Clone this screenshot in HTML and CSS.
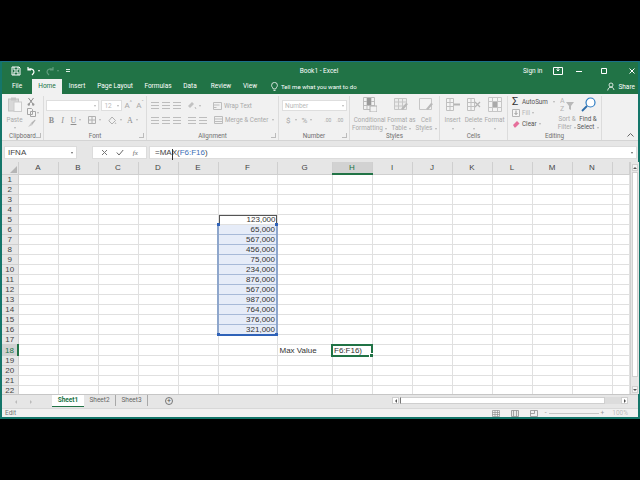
FILE: index.html
```html
<!DOCTYPE html>
<html>
<head>
  <title>Book1 - Excel</title>
  <link rel="stylesheet" href="styles.css">
</head>
<body>
  <div class="window">
    <div class="titlebar">
      <div class="qat">
        <svg class="qat-save" width="10" height="10" viewBox="0 0 10 10"><path d="M1 1h7l1 1v7H1z M3 1v3h4V1 M3 9V6h4v3" fill="none" stroke="#fff" stroke-width="1"/></svg>
        <svg class="qat-undo" width="10" height="10" viewBox="0 0 10 10"><path d="M2 1v3h3 M2 4c2-2 6-1 6 2 0 1-1 2-2 3" fill="none" stroke="#fff" stroke-width="1.2"/></svg>
        <span class="caret-white"></span>
        <svg class="qat-redo" width="10" height="10" viewBox="0 0 10 10"><path d="M8 1v3H5 M8 4C6 2 2 3 2 6c0 1 1 2 2 3" fill="none" stroke="#5f9c7c" stroke-width="1.2"/></svg>
        <span class="caret-dim"></span>
        <span class="qat-more"></span>
      </div>
      <div class="doc-title">Book1 - Excel</div>
      <div class="win-controls">
        <span class="sign-in">Sign in</span>
        <svg class="win-display" width="10" height="8" viewBox="0 0 10 8"><path d="M.5.500h9v7h-9z M5 .5v3 M3.500 2.500L5 4l1.500-1.500" fill="none" stroke="#fff"/></svg>
        <svg class="win-min" width="8" height="8" viewBox="0 0 8 8"><path d="M1 4.500h6" stroke="#fff"/></svg>
        <svg class="win-max" width="8" height="8" viewBox="0 0 8 8"><path d="M1.500 1.500h5v5h-5z" fill="none" stroke="#fff"/></svg>
        <svg class="win-close" width="8" height="8" viewBox="0 0 8 8"><path d="M1.500 1.500l5 5m0-5l-5 5" stroke="#fff"/></svg>
      </div>
    </div>

    <div class="tabs">
      <span class="tab tab-file">File</span>
      <span class="tab tab-active">Home</span>
      <span class="tab tab-insert">Insert</span>
      <span class="tab tab-layout">Page Layout</span>
      <span class="tab tab-formulas">Formulas</span>
      <span class="tab tab-data">Data</span>
      <span class="tab tab-review">Review</span>
      <span class="tab tab-view">View</span>
      <svg class="bulb" width="7" height="10" viewBox="0 0 7 10"><path d="M2.300 7C2 5.500.6 5 .6 3.300a2.900 2.900 0 0 1 5.800 0C6.400 5 5 5.500 4.700 7z M2.500 8.500h2" fill="none" stroke="#fff" stroke-width=".8"/></svg>
      <span class="tell-me">Tell me what you want to do</span>
      <span class="share">
        <svg width="8" height="9" viewBox="0 0 8 9"><circle cx="4" cy="3" r="2" fill="none" stroke="#fff" stroke-width=".8"/><path d="M.7 8.500C1 6 2.500 5.200 4 5.200M4 5.200C5.500 5.200 6.500 6 7 8" fill="none" stroke="#fff" stroke-width=".8"/></svg>
        Share
      </span>
    </div>

    <div class="ribbon">
      <section class="group group-clipboard">
        <div class="group-body clipboard-body">
          <div class="big-btn paste-btn">
            <svg width="14" height="15" viewBox="0 0 14 15"><rect x=".5" y="2" width="10" height="12" fill="#d8d8d8" stroke="#c2c2c2"/><rect x="3" y=".5" width="5" height="3" fill="#c4c4c4"/><rect x="6" y="5" width="7.500" height="9.500" fill="#f6f6f6" stroke="#cccccc"/></svg>
            <span>Paste</span>
            <i class="caret"></i>
          </div>
          <div class="clip-tools">
            <svg width="8" height="9" viewBox="0 0 8 9"><path d="M1.500 1l4.500 6M6.500 1L2 7" stroke="#8a8a8a" fill="none"/><circle cx="1.800" cy="7.500" r="1.200" fill="#999"/><circle cx="6.200" cy="7.500" r="1.200" fill="#999"/></svg>
            <span class="clip-copy"><svg width="9" height="9" viewBox="0 0 9 9"><path d="M.5.500h4l1 1v5h-5z M3.500 3.500h5v5h-5z" fill="#f4f4f4" stroke="#a5a5a5"/></svg><i class="caret"></i></span>
            <svg width="9" height="9" viewBox="0 0 9 9"><path d="M4 4l4-3.500.5 1L5 6z" fill="#b5b5b5"/><path d="M1 8l3-4 1.500 2z" fill="#c9c9c9"/></svg>
          </div>
        </div>
        <div class="group-label">Clipboard<i class="launcher"></i></div>
      </section>

      <section class="group group-font">
        <div class="group-body stack">
          <div class="row row-top">
            <span class="combo combo-font"><i class="caret"></i></span>
            <span class="combo combo-size">12<i class="caret"></i></span>
            <span class="font-grow">A<sup>^</sup></span>
            <span class="font-grow">A<sup>ˇ</sup></span>
          </div>
          <div class="row row-bottom font-tools">
            <b class="g-b">B</b><em class="g-i">I</em><u class="g-u">U</u><i class="caret"></i>
            <svg class="g-border" width="8" height="8" viewBox="0 0 8 8"><path d="M.5.500h7v7h-7z M4 .5v7 M.5 4h7" fill="none" stroke="#b0b0b0"/></svg><i class="caret"></i>
            <svg class="g-fill" width="9" height="9" viewBox="0 0 9 9"><path d="M4 1l3.500 3.500L4 8 .8 4.800z" fill="none" stroke="#b0b0b0"/><path d="M7.500 6l1 2h-2z" fill="#c4c4c4"/></svg><i class="caret"></i>
            <span class="g-color">A</span><i class="caret"></i>
          </div>
        </div>
        <div class="group-label">Font<i class="launcher"></i></div>
      </section>

      <section class="group group-align">
        <div class="group-body stack">
          <div class="row row-top align-row">
            <i class="lines lines-a"></i><i class="lines lines-b"></i><i class="lines lines-c"></i>
            <svg class="orient" width="10" height="9" viewBox="0 0 10 9"><path d="M1 5l4-4 2 2-4 4z" fill="#c2c2c2"/><path d="M8 6l1 2" stroke="#bbb"/></svg><i class="caret"></i>
            <svg class="wrap-ico" width="9" height="8" viewBox="0 0 9 8"><path d="M.5.500h8v7h-8z M.5 3h6 M.5 5.500h3" fill="none" stroke="#bdbdbd"/></svg>
            <span class="align-text">Wrap Text</span>
          </div>
          <div class="row row-bottom align-row">
            <i class="lines lines-a"></i><i class="lines lines-b"></i><i class="lines lines-c"></i>
            <i class="lines indent-a"></i><i class="lines indent-b"></i>
            <svg class="merge-ico" width="9" height="8" viewBox="0 0 9 8"><path d="M.5.500h8v7h-8z M.5 3h8 M.5 5.500h8" fill="none" stroke="#bdbdbd"/></svg>
            <span class="align-text">Merge &amp; Center</span><i class="caret merge-caret"></i>
          </div>
        </div>
        <div class="group-label">Alignment<i class="launcher"></i></div>
      </section>

      <section class="group group-number">
        <div class="group-body stack">
          <div class="row row-top">
            <span class="combo combo-number">Number<i class="caret"></i></span>
          </div>
          <div class="row row-bottom number-tools">
            <span class="n-cur">$</span><i class="caret"></i>
            <span class="n-pct">%</span><i class="caret n-com"></i>
            <span class="n-dec n-dec-first">.00</span><span class="n-dec">.00</span>
          </div>
        </div>
        <div class="group-label">Number<i class="launcher"></i></div>
      </section>

      <section class="group group-styles">
        <div class="group-body big-row">
          <div class="big-btn style-cond">
            <svg width="14" height="15" viewBox="0 0 14 15"><path d="M.5.500h11v12H.5z M4 .5v12 M8 .5v12 M.5 4.500h11 M.5 8.500h11" fill="#f2f2f2" stroke="#bcbcbc"/><rect x="4" y="1" width="4" height="7" fill="#9a9a9a"/><rect x="7" y="9" width="7" height="6" fill="#f2f2f2" stroke="#b0b0b0"/></svg>
            <span>Conditional<br>Formatting <i class="caret"></i></span>
          </div>
          <div class="big-btn style-table">
            <svg width="15" height="15" viewBox="0 0 15 15"><path d="M.5 1.500h12v11H.5z M.5 5h12 M.5 9h12 M4.500 1.500v11 M8.500 1.500v11" fill="#ececec" stroke="#c6c6c6"/><path d="M9 13l5-6-2-1-5 6z" fill="#b9b9b9"/></svg>
            <span>Format as<br>Table <i class="caret"></i></span>
          </div>
          <div class="big-btn style-cell">
            <svg width="15" height="15" viewBox="0 0 15 15"><path d="M.5 1.500h12v11H.5z" fill="#f2f2f2" stroke="#c6c6c6"/><path d="M9 13l5-6-2-1-5 6z" fill="#b9b9b9"/></svg>
            <span>Cell<br>Styles <i class="caret"></i></span>
          </div>
        </div>
        <div class="group-label">Styles</div>
      </section>

      <section class="group group-cells">
        <div class="group-body big-row">
          <div class="big-btn cell-btn">
            <svg width="14" height="15" viewBox="0 0 14 15"><path d="M.5 1.500h7v12h-7z M.5 5.500h7 M.5 9.500h7 M4 1.500v12" fill="#f4f4f4" stroke="#c0c0c0"/><path d="M8 7.500h6" stroke="#b5b5b5" stroke-width="2"/></svg>
            <span>Insert<br><i class="caret"></i></span>
          </div>
          <div class="big-btn cell-btn">
            <svg width="14" height="15" viewBox="0 0 14 15"><path d="M.5 1.500h7v12h-7z M.5 5.500h7 M.5 9.500h7 M4 1.500v12" fill="#f4f4f4" stroke="#c0c0c0"/><path d="M8 5l5 5m0-5l-5 5" stroke="#b5b5b5" stroke-width="1.300"/></svg>
            <span>Delete<br><i class="caret"></i></span>
          </div>
          <div class="big-btn cell-btn">
            <svg width="14" height="15" viewBox="0 0 14 15"><path d="M.5.500h13v14H.5z M4.500.5v14 M9.500.5v14 M.5 4.500h13 M.5 10.500h13" fill="#f4f4f4" stroke="#c6c6c6"/><rect x="5" y="5" width="4" height="5" fill="#aaa"/></svg>
            <span>Format<br><i class="caret"></i></span>
          </div>
        </div>
        <div class="group-label">Cells</div>
      </section>

      <section class="group group-editing">
        <div class="group-body edit-body">
          <div class="edit-list">
            <div class="edit-item edit-sum"><span class="sigma">Σ</span>AutoSum<i class="caret sum-caret"></i></div>
            <div class="edit-item edit-off"><svg width="8" height="8" viewBox="0 0 8 8"><path d="M.5.500h7v7h-7z" fill="#f5f5f5" stroke="#b5b5b5"/><path d="M4 1.500v4 M2.500 4L4 5.500 5.500 4" stroke="#9a9a9a" fill="none"/></svg>Fill <i class="caret"></i></div>
            <div class="edit-item edit-clear"><svg width="8" height="8" viewBox="0 0 8 8"><path d="M1 5l4-4 2.500 2.500-4 4H2.500z" fill="#e66f9b"/></svg>Clear <i class="caret"></i></div>
          </div>
          <div class="big-btn sort-btn">
            <svg width="15" height="15" viewBox="0 0 15 15"><text x="0" y="6" class="az">A</text><text x="0" y="14" class="az">Z</text><path d="M6 5h8l-3 4v4l-2-1V9z" fill="#b9b9b9"/></svg>
            <span>Sort &amp;<br>Filter <i class="caret"></i></span>
          </div>
          <div class="big-btn find-btn">
            <svg width="15" height="15" viewBox="0 0 15 15"><circle cx="9.500" cy="5.500" r="4.500" fill="#fff" stroke="#2c7cc4" stroke-width="1.200"/><path d="M6 9l-5 5" stroke="#2c6ca8" stroke-width="1.800"/></svg>
            <span>Find &amp;<br>Select <i class="caret"></i></span>
          </div>
        </div>
        <div class="group-label">Editing</div>
      </section>

      <div class="ribbon-end"><svg width="7" height="4" viewBox="0 0 7 4"><path d="M.5 3.500l3-3 3 3" fill="none" stroke="#666"/></svg></div>
    </div>

    <div class="formula-bar">
      <div class="name-box">IFNA<i class="caret caret-dark"></i></div>
      <div class="fx-grip"></div>
      <div class="fx-buttons">
        <svg width="7" height="7" viewBox="0 0 7 7"><path d="M1 1l5 5m0-5L1 6" stroke="#777"/></svg>
        <svg width="8" height="7" viewBox="0 0 8 7"><path d="M.8 3.500L3 6 7.200 1" fill="none" stroke="#666"/></svg>
        <span class="fx">fx</span>
      </div>
      <div class="formula-input">=MAX(<span class="ref">F6:F16</span>)<span class="ibeam"></span><i class="caret caret-dark formula-caret"></i></div>
    </div>

    <div class="sheet-area">
      <table class="sheet">
        <colgroup>
          <col class="c-head"><col class="c-std"><col class="c-std"><col class="c-std"><col class="c-std"><col class="c-std"><col class="c-f"><col class="c-g"><col class="c-std"><col class="c-std"><col class="c-std"><col class="c-std"><col class="c-std"><col class="c-std"><col class="c-std"><col class="c-end">
        </colgroup>
        <thead>
          <tr><th class="corner"><i></i></th><th>A</th><th>B</th><th>C</th><th>D</th><th>E</th><th>F</th><th>G</th><th class="head-active">H</th><th>I</th><th>J</th><th>K</th><th>L</th><th>M</th><th>N</th><th></th></tr>
        </thead>
        <tbody>
          <tr><th>1</th><td></td><td></td><td></td><td></td><td></td><td></td><td></td><td></td><td></td><td></td><td></td><td></td><td></td><td></td><td></td></tr>
          <tr><th>2</th><td></td><td></td><td></td><td></td><td></td><td></td><td></td><td></td><td></td><td></td><td></td><td></td><td></td><td></td><td></td></tr>
          <tr><th>3</th><td></td><td></td><td></td><td></td><td></td><td></td><td></td><td></td><td></td><td></td><td></td><td></td><td></td><td></td><td></td></tr>
          <tr><th>4</th><td></td><td></td><td></td><td></td><td></td><td></td><td></td><td></td><td></td><td></td><td></td><td></td><td></td><td></td><td></td></tr>
          <tr><th>5</th><td></td><td></td><td></td><td></td><td></td><td class="num first">123,000</td><td></td><td></td><td></td><td></td><td></td><td></td><td></td><td></td><td></td></tr>
          <tr><th>6</th><td></td><td></td><td></td><td></td><td></td><td class="num pick pick-top">65,000</td><td></td><td></td><td></td><td></td><td></td><td></td><td></td><td></td><td></td></tr>
          <tr><th>7</th><td></td><td></td><td></td><td></td><td></td><td class="num pick">567,000</td><td></td><td></td><td></td><td></td><td></td><td></td><td></td><td></td><td></td></tr>
          <tr><th>8</th><td></td><td></td><td></td><td></td><td></td><td class="num pick">456,000</td><td></td><td></td><td></td><td></td><td></td><td></td><td></td><td></td><td></td></tr>
          <tr><th>9</th><td></td><td></td><td></td><td></td><td></td><td class="num pick">75,000</td><td></td><td></td><td></td><td></td><td></td><td></td><td></td><td></td><td></td></tr>
          <tr><th>10</th><td></td><td></td><td></td><td></td><td></td><td class="num pick">234,000</td><td></td><td></td><td></td><td></td><td></td><td></td><td></td><td></td><td></td></tr>
          <tr><th>11</th><td></td><td></td><td></td><td></td><td></td><td class="num pick">876,000</td><td></td><td></td><td></td><td></td><td></td><td></td><td></td><td></td><td></td></tr>
          <tr><th>12</th><td></td><td></td><td></td><td></td><td></td><td class="num pick">567,000</td><td></td><td></td><td></td><td></td><td></td><td></td><td></td><td></td><td></td></tr>
          <tr><th>13</th><td></td><td></td><td></td><td></td><td></td><td class="num pick">987,000</td><td></td><td></td><td></td><td></td><td></td><td></td><td></td><td></td><td></td></tr>
          <tr><th>14</th><td></td><td></td><td></td><td></td><td></td><td class="num pick">764,000</td><td></td><td></td><td></td><td></td><td></td><td></td><td></td><td></td><td></td></tr>
          <tr><th>15</th><td></td><td></td><td></td><td></td><td></td><td class="num pick">376,000</td><td></td><td></td><td></td><td></td><td></td><td></td><td></td><td></td><td></td></tr>
          <tr><th>16</th><td></td><td></td><td></td><td></td><td></td><td class="num pick pick-bottom">321,000</td><td></td><td></td><td></td><td></td><td></td><td></td><td></td><td></td><td></td></tr>
          <tr><th>17</th><td></td><td></td><td></td><td></td><td></td><td></td><td></td><td></td><td></td><td></td><td></td><td></td><td></td><td></td><td></td></tr>
          <tr><th class="row-active">18</th><td></td><td></td><td></td><td></td><td></td><td></td><td>Max Value</td><td class="active-cell">F6:F16)</td><td></td><td></td><td></td><td></td><td></td><td></td><td></td></tr>
          <tr><th>19</th><td></td><td></td><td></td><td></td><td></td><td></td><td></td><td></td><td></td><td></td><td></td><td></td><td></td><td></td><td></td></tr>
          <tr><th>20</th><td></td><td></td><td></td><td></td><td></td><td></td><td></td><td></td><td></td><td></td><td></td><td></td><td></td><td></td><td></td></tr>
          <tr><th>21</th><td></td><td></td><td></td><td></td><td></td><td></td><td></td><td></td><td></td><td></td><td></td><td></td><td></td><td></td><td></td></tr>
          <tr><th>22</th><td></td><td></td><td></td><td></td><td></td><td></td><td></td><td></td><td></td><td></td><td></td><td></td><td></td><td></td><td></td></tr>
        </tbody>
      </table>
      <div class="v-scroll">
        <span class="v-btn"><i class="tri-up"></i></span>
        <span class="v-thumb"></span>
        <span class="v-btn"><i class="tri-down"></i></span>
      </div>
    </div>

    <div class="sheet-tabs">
      <div class="tab-nav"><i class="tri-left"></i><i class="tri-right"></i></div>
      <span class="stab stab-active">Sheet1</span>
      <span class="stab">Sheet2</span>
      <span class="stab">Sheet3</span>
      <span class="add-sheet">+</span>
      <div class="h-scroll">
        <span class="h-btn"><i class="tri-left tri-dark"></i></span>
        <span class="h-thumb"></span>
        <span class="h-track"></span>
        <span class="h-btn"><i class="tri-right tri-dark"></i></span>
      </div>
    </div>

    <div class="status">
      <span class="status-mode">Edit</span>
      <div class="status-right">
        <svg width="8" height="7" viewBox="0 0 8 7"><path d="M.5.500h7v6h-7z M3 .5v6 M5.500.5v6 M.5 2.500h7 M.5 4.500h7" fill="none" stroke="#8f8f8f" stroke-width=".7"/></svg>
        <svg width="8" height="7" viewBox="0 0 8 7"><path d="M.5.500h7v6h-7z M2.500.5v6 M5.500.5v6" fill="#e8e8e8" stroke="#8f8f8f" stroke-width=".8"/></svg>
        <svg width="8" height="7" viewBox="0 0 8 7"><path d="M.5.500h7v6h-7z M.5 3.500h4v-3" fill="none" stroke="#8f8f8f" stroke-width=".8"/></svg>
        <div class="zoom-slider"><span>-</span><i class="zoom-track"></i><span>+</span></div>
        <span class="zoom-pct">100%</span>
      </div>
    </div>
  </div>
</body>
</html>
```

FILE: styles.css
```css
* {
  box-sizing: border-box;
}
body {
  margin: 0;
  width: 640px;
  height: 480px;
  background: #000;
  overflow: hidden;
  padding-top: 61px;
  font-family: Roboto, sans-serif;
}
i {
  font-style: normal;
}
.window {
  width: 640px;
  height: 358px;
  background: #e6e6e6;
  border: 1px solid #14766a;
  border-width: 1px 2px 2px 2px;
  border-top-color: #1a6f8a;
  display: flex;
  flex-direction: column;
}

/* title bar */
.titlebar {
  height: 18px;
  background: #217346;
  color: #fff;
  display: flex;
  align-items: center;
  font-size: 6.5px;
}
.qat {
  width: 206px;
  display: flex;
  align-items: center;
  padding-left: 9px;
}
.qat-undo {
  margin-left: 5px;
}
.caret-white, .caret-dim {
  width: 0;
  height: 0;
  margin-left: 2px;
  border: 1.500px solid transparent;
  border-top: 2px solid #fff;
  border-bottom: 0;
}
.caret-dim {
  border-top-color: #5f9c7c;
}
.qat-redo {
  margin-left: 5px;
}
.qat-more {
  width: 4px;
  height: 3px;
  margin-left: 7px;
  border-top: 1px solid #dfeee6;
  border-bottom: 1px solid #dfeee6;
}
.doc-title {
  width: 222px;
  text-align: center;
}
.win-controls {
  flex: 1;
  display: flex;
  align-items: center;
  padding-left: 93px;
}
.win-display {
  margin-left: 11px;
}
.win-min {
  margin-left: 12px;
}
.win-max {
  margin-left: 17px;
}
.win-close {
  margin-left: 20px;
}

/* ribbon tabs */
.tabs {
  height: 15px;
  background: #217346;
  color: #fff;
  display: flex;
  align-items: center;
  font-size: 6.5px;
}
.tab {
  height: 15px;
  line-height: 15px;
  text-align: center;
}
.tab-file { width: 30px; }
.tab-active { width: 30px; background: #f1f1f1; color: #217346; }
.tab-insert { width: 30px; }
.tab-layout { width: 46px; }
.tab-formulas { width: 40px; }
.tab-data { width: 24px; }
.tab-review { width: 38px; }
.tab-view { width: 20px; }
.bulb {
  margin-left: 11px;
}
.tell-me {
  margin-left: 3px;
  font-size: 6.1px;
}
.share {
  margin-left: auto;
  padding-right: 3px;
  display: flex;
  align-items: center;
  gap: 3px;
}

/* ribbon */
.ribbon {
  height: 47px;
  background: #f1f1f1;
  border-bottom: 1px solid #d4d4d4;
  display: flex;
  color: #a9a9a9;
  font-size: 6.3px;
}
.group {
  display: flex;
  flex-direction: column;
  border-right: 1px solid #dcdcdc;
  margin: 2px 0 0;
}
.group-clipboard { width: 42px; }
.group-font { width: 103px; }
.group-align { width: 132px; }
.group-number { width: 71px; }
.group-styles { width: 90px; }
.group-cells { width: 68px; }
.group-editing { width: 94px; }
.ribbon-end {
  flex: 1;
  display: flex;
  align-items: flex-end;
  justify-content: flex-end;
  padding: 0 4px 3px 0;
}
.group-body {
  flex: 1;
  min-height: 0;
}
.group-label {
  position: relative;
  height: 8px;
  line-height: 8px;
  text-align: center;
  color: #6f6f6f;
}
.launcher {
  position: absolute;
  right: 2px;
  top: 1px;
  width: 5px;
  height: 5px;
  border-right: 1px solid #bbb;
  border-bottom: 1px solid #bbb;
}
.caret {
  display: inline-block;
  width: 0;
  height: 0;
  vertical-align: middle;
  border-left: 1.500px solid transparent;
  border-right: 1.500px solid transparent;
  border-top: 2px solid #b5b5b5;
}
.caret-dark {
  border-top-color: #666;
}
.stack {
  display: flex;
  flex-direction: column;
}
.row {
  display: flex;
  align-items: center;
}
.row-top {
  height: 13px;
  margin-top: 3px;
}
.row-bottom {
  height: 14px;
  margin-top: 1px;
}

.big-btn {
  display: flex;
  flex-direction: column;
  align-items: center;
  line-height: 8px;
  text-align: center;
  white-space: nowrap;
}
.big-btn svg {
  flex: none;
  margin-bottom: 4px;
}

/* clipboard */
.clipboard-body {
  display: flex;
}
.paste-btn {
  width: 25px;
  padding-top: 1px;
}
.paste-btn .caret {
  margin-top: 3px;
}
.clip-tools {
  display: flex;
  flex-direction: column;
  gap: 2px;
  padding-top: 1px;
}
.clip-copy {
  display: flex;
  align-items: center;
  gap: 1px;
}

/* font */
.group-font .row {
  padding-left: 2px;
}
.combo {
  height: 11px;
  background: #fff;
  border: 1px solid #dedede;
  display: flex;
  align-items: center;
  justify-content: space-between;
  padding: 0 2px;
  font-size: 6.5px;
  color: #b9b9b9;
}
.combo-font { width: 54px; justify-content: flex-end; }
.combo-size { width: 21px; margin-left: 2px; }
.font-grow {
  width: 12px;
  margin-left: 0;
  text-align: center;
  font-size: 8px;
  color: #a5a5a5;
}
.font-grow sup {
  font-size: 5px;
  line-height: 0;
}
.font-tools {
  font-family: "Liberation Serif", serif;
  font-size: 8px;
  color: #8f8f8f;
}
.font-tools b, .font-tools em, .font-tools u {
  width: 11px;
  text-align: center;
}
.g-border { margin: 0 3px 0 7px; }
.g-fill { margin: 0 3px 0 7px; }
.g-color { margin: 0 3px 0 5px; font-size: 8px; }

/* alignment */
.align-row {
  padding-left: 4px;
}
.lines {
  width: 8px;
  height: 7px;
  margin-right: 3px;
  background: repeating-linear-gradient(to bottom, #bdbdbd 0, #bdbdbd 1px, transparent 1px, transparent 3px);
}
.orient { margin: 0 2px 0 3px; }
.wrap-ico { margin-left: 12px; }
.align-text {
  margin-left: 2px;
  white-space: nowrap;
}
.indent-a { margin-left: 4px; }
.merge-ico { margin-left: 4px; }
.merge-caret { margin-left: 4px; }

/* number */
.group-number .row {
  padding-left: 3px;
}
.combo-number { width: 65px; }
.number-tools {
  color: #a5a5a5;
  font-size: 8px;
}
.n-cur { margin: 0 4px 0 4px; }
.n-pct { margin-left: 5px; }
.n-com { margin-left: 3px; }
.n-dec {
  margin-left: 5px;
  font-size: 5px;
}
.n-dec-first { margin-left: 12px; }

/* styles, cells */
.big-row {
  display: flex;
  padding-top: 1px;
}
.style-cond { width: 40px; }
.style-table { width: 24px; }
.style-cell { width: 26px; }
.cell-btn { width: 21px; }
.group-cells .big-row {
  padding-left: 2px;
}

/* editing */
.edit-body {
  display: flex;
}
.edit-list {
  width: 47px;
  padding-left: 4px;
}
.edit-item {
  display: flex;
  align-items: center;
  gap: 2px;
  height: 11px;
  color: #555;
}
.edit-off { color: #b5b5b5; }
.sigma {
  width: 8px;
  font-size: 11px;
  line-height: 10px;
  color: #333;
}
.sum-caret { margin-left: 3px; }
.sort-btn { width: 24px; padding-top: 1px; }
.find-btn { width: 18px; padding-top: 1px; color: #555; }
.sort-btn svg, .find-btn svg { margin-bottom: 3px; }
.az {
  font-size: 7px;
  fill: #b5b5b5;
}
.big-btn .caret {
  margin-left: 1px;
}

/* formula bar */
.formula-bar {
  height: 21px;
  padding-top: 5px;
  display: flex;
  align-items: flex-start;
  font-family: "Liberation Sans", sans-serif;
  font-size: 8px;
  color: #444;
}
.name-box {
  width: 73px;
  height: 13px;
  margin-left: 2px;
  background: #fff;
  border: 1px solid #dcdcdc;
  padding: 0 3px;
  display: flex;
  align-items: center;
  justify-content: space-between;
}
.fx-grip {
  width: 15px;
}
.fx-buttons {
  width: 55px;
  height: 13px;
  background: #fff;
  border: 1px solid #dcdcdc;
  display: flex;
  align-items: center;
  justify-content: space-around;
  padding: 0 4px;
}
.fx {
  font-family: "Liberation Serif", serif;
  font-style: italic;
  font-size: 7px;
  color: #666;
}
.formula-input {
  position: relative;
  flex: 1;
  height: 13px;
  margin: 0 1px 0 2px;
  background: #fff;
  border: 1px solid #dcdcdc;
  padding-left: 5px;
  display: flex;
  align-items: center;
}
.ref {
  color: #3c6fb5;
}
.ibeam {
  position: absolute;
  left: 22px;
  top: 2px;
  width: 1px;
  height: 11px;
  background: #333;
}
.formula-caret {
  margin-left: auto;
  margin-right: 3px;
}

/* grid */
.sheet-area {
  display: flex;
  height: 232px;
  background: #fff;
}
.sheet {
  width: 627px;
  height: 232px;
  table-layout: fixed;
  border-collapse: collapse;
  font-family: "Liberation Sans", sans-serif;
  font-size: 8px;
  color: #333;
  background: #fff;
}
.c-head { width: 16px; }
.c-std { width: 40px; }
.c-f { width: 59px; }
.c-g { width: 55px; }
.c-end { width: 17px; }
.sheet tr {
  height: 10px;
}
.sheet thead tr {
  height: 12px;
}
.sheet th {
  padding: 0;
  background: #e6e6e6;
  border: 1px solid #cfcfcf;
  border-width: 0 1px 1px 0;
  font-weight: normal;
  color: #444;
  line-height: 9px;
  overflow: hidden;
}
.sheet td {
  padding: 0 2px;
  border: 1px solid #e0e0e0;
  line-height: 9px;
  overflow: hidden;
  white-space: nowrap;
}
.corner {
  position: relative;
}
.corner i {
  position: absolute;
  right: 1px;
  bottom: 1px;
  width: 0;
  height: 0;
  border-left: 7px solid transparent;
  border-bottom: 7px solid #b5b5b5;
}
.sheet .head-active {
  background: #d2d2d2;
  color: #217346;
  border-bottom: 2px solid #217346;
}
.sheet .row-active {
  background: #d2d2d2;
  color: #217346;
  border-right: 2px solid #217346;
}
.sheet .num {
  text-align: right;
  padding-right: 1px;
}
.sheet .first {
  box-shadow: inset 1px 1px 0 #555, inset -1px 0 0 #555;
}
.sheet .pick {
  background: #e6ecf8;
  border-left: 2px solid #8ea6cc;
  border-right: 2px solid #8ea6cc;
  border-top: 1px solid #a8bad8;
  border-bottom: 1px solid #a8bad8;
}
.sheet .pick-top, .sheet .pick-bottom {
  position: relative;
  overflow: visible;
}
.sheet .pick-top {
  border-top: 1px solid #3c6fb5;
}
.sheet .pick-bottom {
  border-bottom: 2px solid #2f62b8;
}
.pick-top::before, .pick-top::after, .pick-bottom::before, .pick-bottom::after {
  content: "";
  position: absolute;
  width: 3px;
  height: 3px;
  background: #2f62b8;
}
.pick-top::before { left: -2px; top: -2px; }
.pick-top::after { right: -2px; top: -2px; }
.pick-bottom::before { left: -2px; bottom: -2px; }
.pick-bottom::after { right: -2px; bottom: -2px; }
.sheet .active-cell {
  position: relative;
  overflow: visible;
  border: 2px solid #217346;
  color: #333;
  padding-left: 1px;
}
.active-cell::after {
  content: "";
  position: absolute;
  right: -2px;
  bottom: -2px;
  width: 3px;
  height: 3px;
  background: #217346;
  border: 1px solid #fff;
  border-width: 1px 0 0 1px;
}

/* vertical scrollbar */
.v-scroll {
  flex: 1;
  background: #e6e6e6;
  border-left: 1px solid #cfcfcf;
  display: flex;
  flex-direction: column;
  padding: 2px 1px 1px;
}
.v-btn {
  height: 7px;
  background: #f4f4f4;
  border: 1px solid #d0d0d0;
  display: flex;
  align-items: center;
  justify-content: center;
}
.v-thumb {
  height: 205px;
  margin-top: 1px;
  background: #fff;
  border: 1px solid #cfcfcf;
}
.v-btn:last-child {
  margin-top: auto;
}
.tri-up, .tri-down, .tri-left, .tri-right {
  display: block;
  width: 0;
  height: 0;
  border: 2px solid transparent;
}
.tri-up { border-top: 0; border-bottom-color: #555; }
.tri-down { border-bottom: 0; border-top-color: #555; }
.tri-left { border-left: 0; border-right-color: #bbb; }
.tri-right { border-right: 0; border-left-color: #bbb; }
.tri-left.tri-dark { border-right-color: #555; }
.tri-right.tri-dark { border-left-color: #555; }

/* sheet tabs */
.sheet-tabs {
  height: 14px;
  background: #e6e6e6;
  border-top: 1px solid #c6c6c6;
  display: flex;
  align-items: flex-start;
  font-size: 6.5px;
  color: #666;
}
.tab-nav {
  width: 50px;
  height: 13px;
  display: flex;
  align-items: center;
  gap: 13px;
  padding-left: 13px;
}
.stab {
  width: 32px;
  height: 11px;
  line-height: 11px;
  text-align: center;
  border-right: 1px solid #a8a8a8;
}
.stab-active {
  height: 12px;
  background: #fff;
  color: #217346;
  font-weight: 700;
  border-right: 0;
  border-bottom: 1px solid #217346;
}
.add-sheet {
  width: 8px;
  height: 8px;
  margin: 2px 0 0 17px;
  border: 1px solid #777;
  border-radius: 50%;
  font-size: 7px;
  line-height: 6px;
  text-align: center;
  color: #555;
}
.h-scroll {
  width: 236px;
  height: 7px;
  margin: 2px 0 0 219px;
  display: flex;
}
.h-btn {
  width: 7px;
  background: #fff;
  border: 1px solid #cfcfcf;
  display: flex;
  align-items: center;
  justify-content: center;
}
.h-thumb {
  width: 205px;
  margin-left: 1px;
  background: #fff;
  border: 1px solid #cfcfcf;
  border-left-color: #777;
}
.h-track {
  flex: 1;
  background: #dcdcdc;
}

/* status bar */
.status {
  flex: 1;
  background: #f1f1f1;
  display: flex;
  align-items: center;
  justify-content: space-between;
  padding: 0 10px 0 3px;
  font-size: 6.5px;
  color: #777;
  border-top: 1px solid #d8d8d8;
}
.status-right {
  display: flex;
  align-items: center;
  gap: 11px;
}
.zoom-slider {
  display: flex;
  align-items: center;
  gap: 2px;
  margin-left: -4px;
  color: #999;
}
.zoom-track {
  width: 50px;
  height: 1px;
  background: #c6c6c6;
}
.zoom-pct {
  margin-left: -3px;
  color: #bdbdbd;
}
```
